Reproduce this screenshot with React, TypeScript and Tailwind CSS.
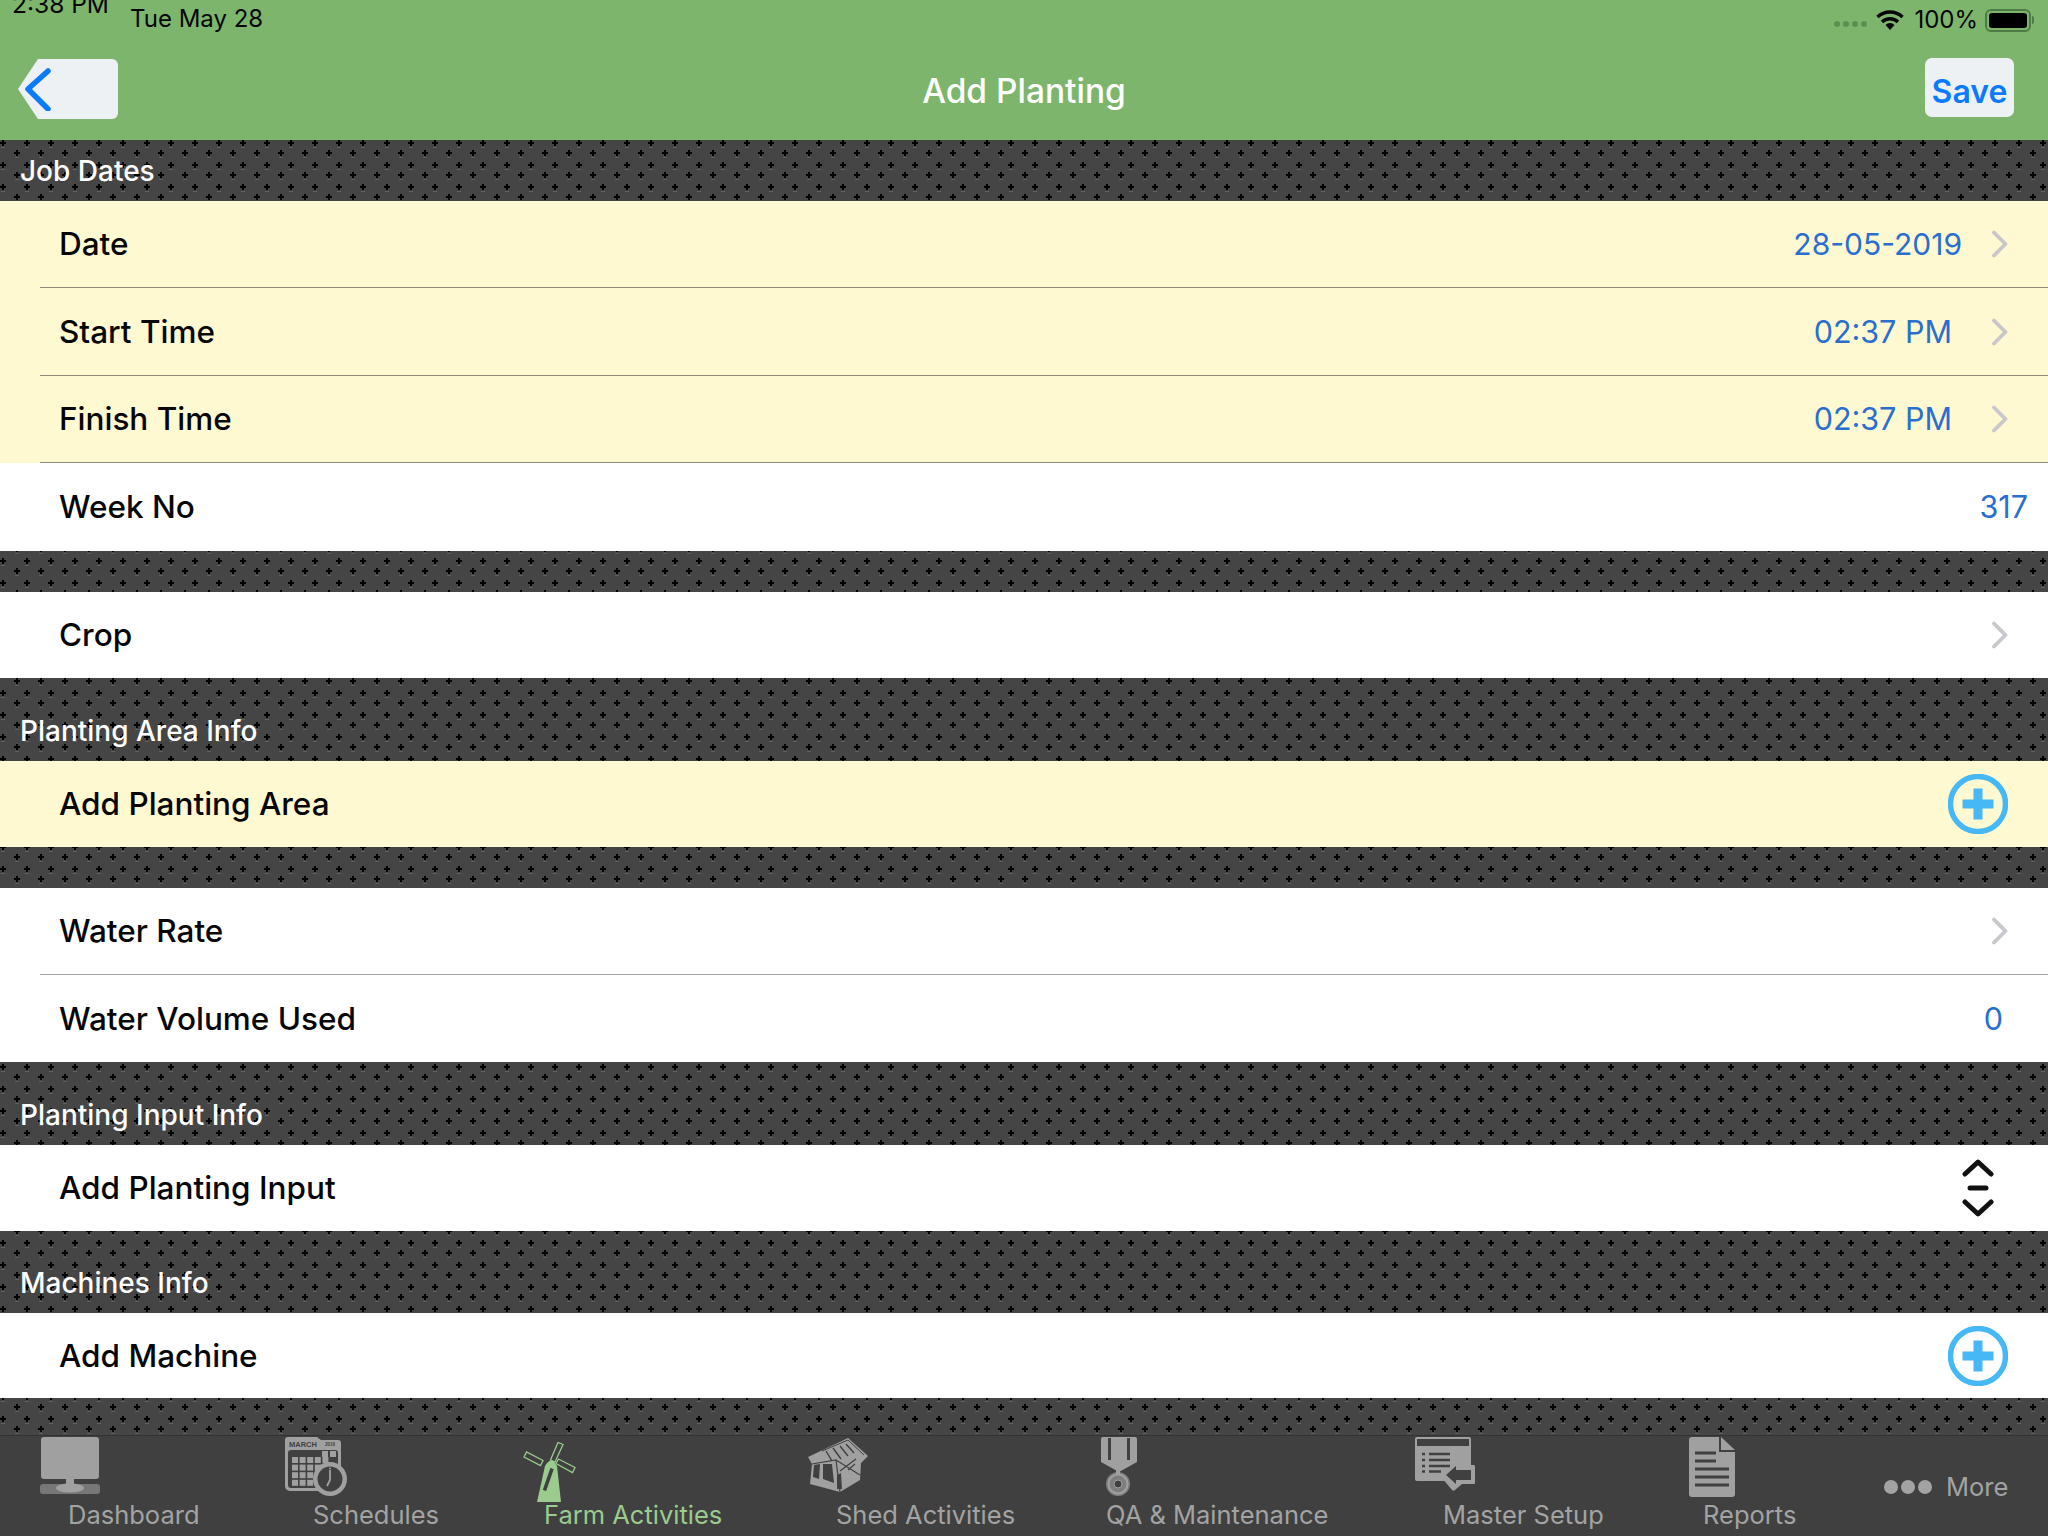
import type { ReactNode } from "react";

const ICON = "#a0a0a0";
const ACTIVE = "#9bcb8e";
const BAR = "#404040";

function Chevron() {
  return (
    <svg width="18" height="28" viewBox="0 0 18 28" className="shrink-0">
      <path d="M3 2.5 L14.5 14 L3 25.5" fill="none" stroke="#c7c7cc" strokeWidth="3.8" strokeLinecap="round" strokeLinejoin="round" />
    </svg>
  );
}

function PlusCircle() {
  return (
    <svg width="60" height="60" viewBox="0 0 60 60" className="shrink-0">
      <circle cx="30" cy="30" r="27.5" fill="none" stroke="#46b8f6" strokeWidth="5.5" />
      <path d="M25.5 14.5 H34.5 V25.5 H45.5 V34.5 H34.5 V45.5 H25.5 V34.5 H14.5 V25.5 H25.5 Z" fill="#46b8f6" />
    </svg>
  );
}

function SortIcon() {
  return (
    <svg width="32" height="58" viewBox="0 0 32 58" className="shrink-0">
      <path d="M3 15 L16 3 L29 15 M3 43 L16 55 L29 43" fill="none" stroke="#111" strokeWidth="5" strokeLinecap="round" strokeLinejoin="round" />
      <path d="M8 29 H24" stroke="#111" strokeWidth="5" strokeLinecap="round" />
    </svg>
  );
}

function Section({ title, className }: { title?: string; className: string }) {
  return (
    <div className={"flex items-end pl-[20px] pb-[14px] text-white font-medium text-[28px] leading-[32px] " + className}>
      {title}
    </div>
  );
}

function Row({
  label,
  className,
  yellow,
  line,
  children,
}: {
  label: string;
  className: string;
  yellow?: boolean;
  line?: boolean;
  children?: ReactNode;
}) {
  return (
    <div className={(yellow ? "bg-[#fff9d1] " : "bg-white ") + "pl-[40px] " + className}>
      <div className={"h-full flex items-center justify-between pl-[19px] " + (line ? (yellow ? "border-b border-[#8f8c78]" : "border-b border-[#a2a2a2]") : "")}>
        <span className="text-[31.5px] font-medium text-[#060606]">{label}</span>
        {children}
      </div>
    </div>
  );
}

function Value({ text, chevron, mr, size = "text-[30.5px]" }: { text: string; chevron?: boolean; mr: string; size?: string }) {
  return (
    <div className="flex items-center">
      <span className={"text-[#2a6fcf] " + size + " " + mr}>{text}</span>
      {chevron && (
        <div className="mr-[39px] flex">
          <Chevron />
        </div>
      )}
    </div>
  );
}

function DashboardIcon() {
  return (
    <svg width="60" height="60" viewBox="0 0 60 60">
      <rect x="1" y="0" width="58" height="42" rx="3" fill={ICON} />
      <rect x="26" y="42" width="8" height="8" fill={ICON} />
      <rect x="0" y="47" width="60" height="10" rx="3" fill="#777" />
      <ellipse cx="30" cy="51" rx="14" ry="4.5" fill={ICON} />
    </svg>
  );
}

function SchedulesIcon() {
  const cells = [];
  for (let r = 0; r < 4; r++) {
    for (let c = 0; c < 5; c++) {
      if (r === 3 && c > 2) continue;
      cells.push(<rect key={r + "-" + c} x={7 + c * 7.6} y={20 + r * 7.6} width="6" height="6" fill={ICON} />);
    }
  }
  return (
    <svg width="62" height="60" viewBox="0 0 62 60">
      <path d="M3 0 H32 L36 3 H53 Q56 3 56 6 V42 H0 V3 Q0 0 3 0 Z" fill={ICON} />
      <rect x="0" y="10" width="56" height="44" rx="5" fill={ICON} />
      <rect x="3" y="13" width="50" height="38" rx="3" fill={BAR} />
      <text x="4" y="9.5" fontSize="7.5" fontWeight="700" fill={BAR} fontFamily="Liberation Sans, sans-serif">MARCH</text>
      <text x="40" y="8.5" fontSize="4.5" fontWeight="700" fill={BAR} fontFamily="Liberation Sans, sans-serif">2018</text>
      {cells}
      <rect x="37" y="14" width="6" height="6" fill={ICON} />
      <rect x="45" y="14" width="6" height="6" fill={ICON} />
      <circle cx="45" cy="42" r="17" fill={ICON} />
      <circle cx="45" cy="42" r="12.5" fill={BAR} />
      <path d="M45 33 V43 L42 49" fill="none" stroke={ICON} strokeWidth="1.8" />
      <circle cx="45" cy="31.5" r="1" fill={ICON} />
    </svg>
  );
}

function WindmillIcon() {
  return (
    <svg width="54" height="62" viewBox="0 0 54 62">
      <path d="M14 60 L22 24 Q28 14 34 24 L38 60 Z" fill={ACTIVE} />
      <g fill={BAR} stroke={ACTIVE} strokeWidth="1.3">
        <path d="M35 0.5 L40 2.5 L32 20 L27.5 18 Z" />
        <path d="M1 15 L3.5 10 L20 18.5 L17.5 23.5 Z" />
        <path d="M33 21.5 L35.5 17 L52 25.5 L49.5 30.5 Z" />
        <path d="M19 48 L27 25 L31.5 27 L23.5 50 Z" />
      </g>
      <circle cx="28.5" cy="22" r="3.5" fill={ACTIVE} />
    </svg>
  );
}

function ShedIcon() {
  return (
    <svg width="62" height="58" viewBox="0 0 62 58">
      <path d="M0 20 L40 1 L60 19 L53 26 L52 43 L32 55 L2 47 L4 27 Z" fill={ICON} />
      <path d="M14 14 L40 3 L56 18" fill="none" stroke={BAR} strokeWidth="1" />
      <path d="M18 14 L24 24 M25 11 L33 22 M32 9 L40 19 M38 7 L46 16" stroke={BAR} strokeWidth="1.4" />
      <path d="M4 27 L28 23 L32 55 M28 23 L52 38" fill="none" stroke={BAR} strokeWidth="1.2" />
      <path d="M6 28 L12 27 L11 42 L5 40 Z M15 27 L24 27 L26 46 L15 42 Z M29 38 L33 36 L34 52 L29 52 Z" fill={BAR} />
      <path d="M32 34 L48 22 M40 33 L47 27" stroke={BAR} strokeWidth="1.2" />
    </svg>
  );
}

function MedalIcon() {
  return (
    <svg width="38" height="60" viewBox="0 0 38 60">
      <path d="M3 0 H35 Q37 0 37 2 V25 L19 35 L1 25 V2 Q1 0 3 0 Z" fill={ICON} />
      <path d="M9.5 1 V23 M28.5 1 V23" stroke={BAR} strokeWidth="3" />
      <circle cx="18" cy="47" r="12" fill="#7d7d7d" />
      <circle cx="18" cy="47" r="9.5" fill="none" stroke={ICON} strokeWidth="2" />
      <circle cx="18" cy="47" r="4" fill={BAR} stroke={ICON} strokeWidth="1" />
      <rect x="16" y="33" width="4" height="4" fill={ICON} />
    </svg>
  );
}

function MasterIcon() {
  return (
    <svg width="62" height="56" viewBox="0 0 62 56">
      <rect x="0" y="0" width="56" height="44" rx="2" fill={ICON} />
      <rect x="2" y="2" width="52" height="7" fill={BAR} />
      <path d="M7 17 H10 M7 23 H10 M7 29 H10 M7 34.5 H10 M14 17 H35 M14 23 H35 M14 29 H35 M14 34.5 H26" stroke={BAR} strokeWidth="2.4" />
      <path d="M27 41 L40 27 L41 28 H59 Q60 28 60 30 V46 Q60 47 59 47 H47 L40 53 Q39 54 37 53 Z" fill={ICON} />
      <path d="M31 38 L41 29 V33 H56 V43 H41 V47 Z" fill={BAR} />
    </svg>
  );
}

function ReportsIcon() {
  return (
    <svg width="48" height="60" viewBox="0 0 48 60">
      <path d="M3 0 H30 V15 H46 V57 Q46 60 43 60 H3 Q0 60 0 57 V3 Q0 0 3 0 Z" fill={ICON} />
      <path d="M32 0 L46 13 H32 Z" fill={ICON} />
      <path d="M6 16 H27 M6 24 H27 M6 32 H40 M6 40 H40 M6 48 H40" stroke={BAR} strokeWidth="3.2" />
    </svg>
  );
}

function Tab({ icon, label, width, labelClass, active }: { icon: ReactNode; label: string; width: string; labelClass: string; active?: boolean }) {
  return (
    <div className={"flex flex-col shrink-0 " + width}>
      <div className="h-[63px] overflow-visible">{icon}</div>
      <span className={"text-[25.5px] leading-[30px] whitespace-nowrap " + labelClass + (active ? " text-[#9bcb8e]" : " text-[#a3a3a3]")}>{label}</span>
    </div>
  );
}

export default function App() {
  return (
    <div className="w-[2048px] h-[1536px] overflow-hidden flex flex-col font-['Inter',sans-serif]">
      {/* nav bar with the status bar on top */}
      <div className="relative h-[140px] shrink-0 bg-[#7db56d] text-[#060606]">
        <div className="absolute left-[12px] top-[-11px] text-[24.5px] leading-[30px]">2:38 PM</div>
        <div className="absolute left-[130px] top-[4px] text-[24px] leading-[30px]">Tue May 28</div>
        <div className="absolute right-[14px] top-[4px] flex items-center h-[32px]">
          <div className="flex gap-[3px] mr-[9px] mt-[8px]">
            <span className="w-[6px] h-[6px] rounded-full bg-[#5d8f51]" />
            <span className="w-[6px] h-[6px] rounded-full bg-[#5d8f51]" />
            <span className="w-[6px] h-[6px] rounded-full bg-[#5d8f51]" />
            <span className="w-[6px] h-[6px] rounded-full bg-[#5d8f51]" />
          </div>
          <svg width="28" height="22" viewBox="0 0 28 22" className="mr-[10px]">
            <path d="M1.5 8 A18 18 0 0 1 26.5 8 M6 13 A11.5 11.5 0 0 1 22 13" fill="none" stroke="#060606" strokeWidth="3.4" />
            <path d="M9.5 16 A6 6 0 0 1 18.5 16 L14 21 Z" fill="#060606" />
          </svg>
          <span className="text-[24px] mr-[7px]">100%</span>
          <div className="w-[46px] h-[23px] rounded-[6px] border-2 border-[#4f7c44] p-[2px]">
            <div className="w-full h-full rounded-[3px] bg-black" />
          </div>
          <div className="w-[2px] h-[8px] ml-[1px] rounded-r-full bg-[#4f7c44]" />
        </div>
        <div className="absolute left-[18px] top-[59px] w-[100px] h-[60px] bg-[#eef1f4] rounded-r-[6px] [clip-path:polygon(20%_0,100%_0,100%_100%,20%_100%,0_50%)]">
          <svg width="30" height="44" viewBox="0 0 30 44" className="ml-[6px] mt-[8px]">
            <path d="M24 4 L4 22 L24 42" fill="none" stroke="#0a7aff" strokeWidth="5.5" strokeLinecap="round" strokeLinejoin="round" />
          </svg>
        </div>
        <div className="absolute left-0 right-0 top-[69px] text-center text-white font-medium text-[33.5px] leading-[44px]">Add Planting</div>
        <div className="absolute left-[1925px] top-[58px] w-[89px] h-[59px] rounded-[7px] bg-[#eef1f4] flex items-center justify-center pt-[8px] text-[#0a7aff] font-semibold text-[32px]">Save</div>
      </div>

      {/* form, the dotted metal texture runs behind all of it */}
      <div className="h-[1295px] shrink-0 overflow-hidden bg-[#454545] bg-[url(data:image/svg+xml,%3Csvg%20xmlns=%27http://www.w3.org/2000/svg%27%20width=%2724%27%20height=%2722%27%3E%3Cpath%20fill=%27%23606060%27%20d=%27M1%207h4v1H1zM15%2017h4v1h-4z%27/%3E%3Cpath%20d=%27M0%202h6v2H0zM2%200h2v6H2zM14%2012h6v2h-6zM16%2010h2v6h-2z%27/%3E%3C/svg%3E)]">
        <Section title="Job Dates" className="h-[61px]" />
        <Row label="Date" className="h-[87px]" yellow line>
          <Value text="28-05-2019" mr="mr-[29px]" size="text-[30px]" chevron />
        </Row>
        <Row label="Start Time" className="h-[88px]" yellow line>
          <Value text="02:37 PM" mr="mr-[39px]" chevron />
        </Row>
        <Row label="Finish Time" className="h-[87px]" yellow line>
          <Value text="02:37 PM" mr="mr-[39px]" chevron />
        </Row>
        <Row label="Week No" className="h-[88px]">
          <Value text="317" mr="mr-[20px]" />
        </Row>
        <Section className="h-[41px]" />
        <Row label="Crop" className="h-[86px]">
          <Value text="" mr="mr-[0px]" chevron />
        </Row>
        <Section title="Planting Area Info" className="h-[83px]" />
        <Row label="Add Planting Area" className="h-[86px]" yellow>
          <div className="mr-[40px]"><PlusCircle /></div>
        </Row>
        <Section className="h-[41px]" />
        <Row label="Water Rate" className="h-[87px]" line>
          <Value text="" mr="mr-[0px]" chevron />
        </Row>
        <Row label="Water Volume Used" className="h-[87px]">
          <Value text="0" mr="mr-[45px]" />
        </Row>
        <Section title="Planting Input Info" className="h-[83px]" />
        <Row label="Add Planting Input" className="h-[86px]">
          <div className="mr-[54px]"><SortIcon /></div>
        </Row>
        <Section title="Machines Info" className="h-[82px]" />
        <Row label="Add Machine" className="h-[85px]">
          <div className="mr-[40px]"><PlusCircle /></div>
        </Row>
      </div>

      <div className="h-[101px] shrink-0 bg-[#404040] border-t border-[#333] pl-[40px] pt-[1px] flex">
        <Tab icon={<DashboardIcon />} label="Dashboard" width="w-[245px]" labelClass="ml-[28px]" />
        <Tab icon={<SchedulesIcon />} label="Schedules" width="w-[238px]" labelClass="ml-[28px]" />
        <Tab icon={<div className="pt-[5px]"><WindmillIcon /></div>} label="Farm Activities" width="w-[285px]" labelClass="ml-[21px]" active />
        <Tab icon={<ShedIcon />} label="Shed Activities" width="w-[292px]" labelClass="ml-[28px]" />
        <Tab icon={<MedalIcon />} label="QA & Maintenance" width="w-[315px]" labelClass="ml-[6px]" />
        <Tab icon={<MasterIcon />} label="Master Setup" width="w-[274px]" labelClass="ml-[28px]" />
        <Tab icon={<ReportsIcon />} label="Reports" width="w-[195px]" labelClass="ml-[14px]" />
        <div className="flex items-center gap-[12px] h-[100px] text-[25.5px] text-[#a3a3a3]">
          <div className="flex gap-[3px]">
            <span className="w-[14px] h-[14px] rounded-full bg-[#a3a3a3]" />
            <span className="w-[14px] h-[14px] rounded-full bg-[#a3a3a3]" />
            <span className="w-[14px] h-[14px] rounded-full bg-[#a3a3a3]" />
          </div>
          <span className="ml-[2px]">More</span>
        </div>
      </div>
    </div>
  );
}
